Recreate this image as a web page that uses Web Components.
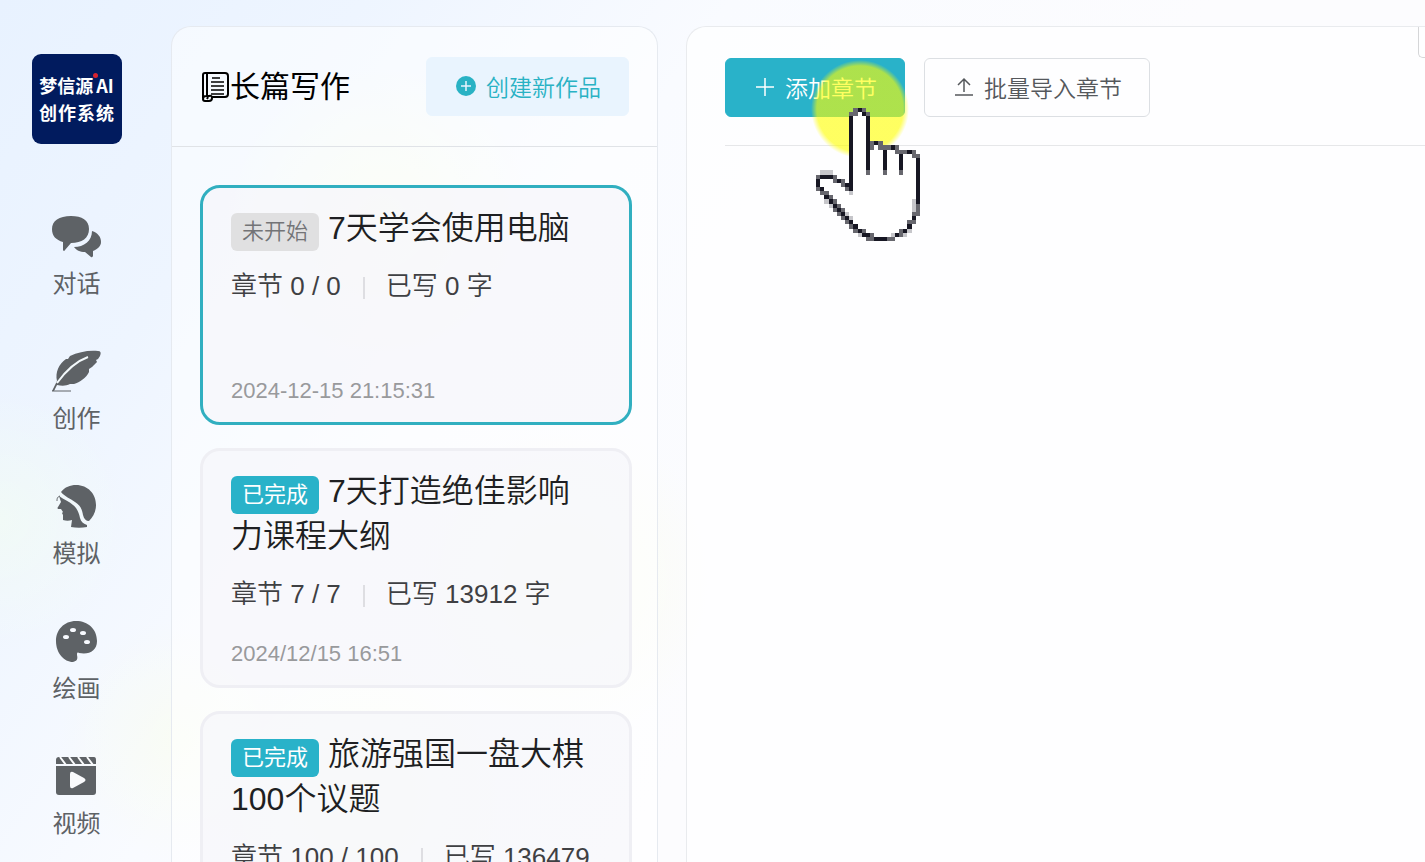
<!DOCTYPE html>
<html lang="zh-CN">
<head>
<meta charset="utf-8">
<title>长篇写作</title>
<style>
  body {
    margin: 0;
    font-family: "Liberation Sans", "Noto Sans CJK SC", sans-serif;
    color: #222;
  }
</style>
</head>
<body>
<novel-app></novel-app>

<script>
const ICONS = {
  chat: `<path d="M19 1C7 1 0 6 0 14c0 7 4 11 11 13v8q1 2 2 0l6-7c11 0 18-5 18-14S30 1 19 1z"/><path d="M40 16c6 2 9 6 9 11 0 4-3 7-8 9v5q-1 2-2 1l-6-5c-5 0-9-2-11-5 10 0 18-6 18-16z"/>`,
  feather: `<path d="M5 31C3 22 7 14 14 9l2 0 2-3c8-4 19-6 28-5q4 0 2 5l-2 3-2 1 1 2-5 5-3 2 0 3c-3 6-9 10-15 12l-4 0c-4 2-8 2-13 1L2 41l-2 0z"/><path d="M5 33C13 22 22 12 36 7" fill="none" stroke="#f2f8fb" stroke-width="2"/><path d="M0 41h19" stroke="currentColor" stroke-width="1" fill="none"/>`,
  head: `<path d="M9 7C13 2 18 0 24 0c12 0 20 9 20 20 0 7-3 12-7 16-3 0-5-2-6-6-1-6-3-10-8-13-5-4-10-5-14-10z"/><path d="M7 11c5 4 10 5 14 9 4 3 6 8 7 13 1 4 4 6 7 7v2c-5 1-11 1-16 0l1-7c-3 1-6 1-9 0l0-5-1-2 1-1-2-3-3 0q-1-1 0-2l3-5z"/><path d="M8 11c-3 1-3 3-3 5" fill="none" stroke="currentColor" stroke-width="1"/>`,
  palette: `<path d="M24 1C12 1 4 10 4 21c0 12 8 21 17 21 4-1 5-3 4-7 0-2 0-3 2-2 10 2 18-2 18-12C45 9 36 1 24 1z"/><g fill="#f8faff"><ellipse cx="14" cy="17" rx="3" ry="2"/><ellipse cx="21" cy="10" rx="3" ry="2"/><ellipse cx="31" cy="13" rx="3" ry="2"/><ellipse cx="35" cy="22" rx="3" ry="2"/></g>`,
  video: `<path d="M7 2h35q2 0 2 3v4H4V5q0-3 3-3z"/><path d="M4 11h40v26q0 3-3 3H7q-3 0-3-3z"/><path d="M8 2l6 8M17 2l6 8M26 2l6 8M35 2l6 8" stroke="#f9fafc" stroke-width="2" fill="none"/><path d="M18 19q0-3 3-2l11 6q3 2 0 4l-11 6q-3 1-3-2z" fill="#f9fafc"/>`
};

const BUTTON_ICONS = {
  plus: '<path d="M11 2v18M2 11h18" fill="none" stroke="currentColor" stroke-width="1.5"/>',
  circle: '<circle cx="11" cy="11" r="10" fill="currentColor"/><path d="M11 6v10M6 11h10" fill="none" stroke="#e9f4fe" stroke-width="1.5"/>',
  upload: '<path d="M11 16V3M5 9l6-6 6 6M2 19h18" fill="none" stroke="currentColor" stroke-width="1.5"/>'
};

class AppLogo extends HTMLElement {
  constructor() {
    super();
    this.attachShadow({ mode: 'open' }).innerHTML = `
      <style>
        :host { display: flex; flex-direction: column; justify-content: center; align-items: center; width: 90px; height: 90px; border-radius: 9px; background: #011b5e; color: #fff; font: 700 18px/27px "Noto Sans CJK SC", sans-serif; }
        .line { display: flex; align-items: center; gap: 3px; white-space: nowrap; }
        .name { position: relative; }
        .name::after { content: ""; position: absolute; top: 1px; right: -5px; width: 5px; height: 5px; border-radius: 50%; background: #d8232f; }
        .wide { gap: 1px; }
      </style>
      <div class="line"><span class="name">梦信源</span><span>AI</span></div>
      <div class="line wide"><span>创</span><span>作</span><span>系</span><span>统</span></div>
    `;
  }
}
customElements.define('app-logo', AppLogo);

class NavItem extends HTMLElement {
  constructor() {
    super();
    this.attachShadow({ mode: 'open' });
  }

  connectedCallback() {
    this.shadowRoot.innerHTML = `
      <style>
        :host { display: block; }
        a { display: flex; flex-direction: column; align-items: center; gap: 8px; color: #5e6266; font-size: 24px; line-height: 36px; text-decoration: none; }
        svg { width: 50px; height: 43px; }
      </style>
      <a href="#${this.getAttribute('icon')}">
        <svg viewBox="0 0 50 43" fill="currentColor" aria-hidden="true">${ICONS[this.getAttribute('icon')]}</svg>
        <slot></slot>
      </a>
    `;
  }
}
customElements.define('nav-item', NavItem);

class SideNav extends HTMLElement {
  constructor() {
    super();
    this.attachShadow({ mode: 'open' }).innerHTML = `
      <style>
        :host { display: block; box-sizing: border-box; padding-top: 54px; }
        app-logo { margin: 0 auto 71px; }
        nav { display: flex; flex-direction: column; gap: 48px; }
      </style>
      <app-logo></app-logo>
      <nav>
        <nav-item icon="chat">对话</nav-item>
        <nav-item icon="feather">创作</nav-item>
        <nav-item icon="head">模拟</nav-item>
        <nav-item icon="palette">绘画</nav-item>
        <nav-item icon="video">视频</nav-item>
      </nav>
    `;
  }
}
customElements.define('side-nav', SideNav);

class ActionButton extends HTMLElement {
  constructor() {
    super();
    this.attachShadow({ mode: 'open' });
  }

  connectedCallback() {
    this.shadowRoot.innerHTML = `
      <style>
        :host { display: block; flex: none; }
        button { display: flex; align-items: center; gap: 9px; box-sizing: border-box; height: 59px; margin: 0; padding: 0 27px 2px 28px; border: 1px solid #dcdfe3; border-radius: 6px; background: transparent; color: #55585c; font-family: inherit; font-size: 23px; font-weight: 350; white-space: nowrap; cursor: pointer; }
        svg { width: 22px; height: 22px; }
        :host([kind="primary"]) button { background: #29b2c9; border-color: #29b2c9; color: #fff; }
        :host([kind="soft"]) button { background: #e9f4fe; border-color: #e9f4fe; color: #29b2c4; }
      </style>
      <button type="button">
        <svg viewBox="0 0 22 22" aria-hidden="true">${BUTTON_ICONS[this.getAttribute('icon')]}</svg>
        <slot></slot>
      </button>
    `;
  }
}
customElements.define('action-button', ActionButton);

class WorkCard extends HTMLElement {
  constructor() {
    super();
    this.attachShadow({ mode: 'open' });
  }

  connectedCallback() {
    const done = this.hasAttribute('done');
    this.shadowRoot.innerHTML = `
      <style>
        :host { display: flex; flex-direction: column; flex: none; box-sizing: border-box; min-height: 240px; padding: 18px 32px 16px 28px; border: 3px solid #efeff4; border-radius: 20px; background: rgba(246, 246, 250, 0.65); }
        :host([active]) { border-color: #31afc0; }
        h3 { margin: 0; font-size: 32px; font-weight: 350; line-height: 45px; color: #1e1f22; }
        .tag { display: inline-block; box-sizing: border-box; height: 38px; margin-right: 9px; padding: 0 11px; border-radius: 6px; background: #e0e0e1; color: #737477; font-size: 22px; line-height: 37px; vertical-align: bottom; }
        .tag.done { background: #29b2c9; color: #fff; font-weight: 400; }
        p { margin: 17px 0 0; font-size: 26px; font-weight: 350; line-height: 36px; color: #3f4043; }
        .bar { display: inline-block; width: 2px; height: 22px; margin: 0 21px 0 22px; background: #dedee2; vertical-align: -4px; }
        time { margin-top: auto; font-size: 22px; line-height: 30px; color: #999a9c; }
      </style>
      <h3><span class="tag ${done ? 'done' : ''}">${done ? '已完成' : '未开始'}</span><slot></slot></h3>
      <p>章节 ${this.getAttribute('chapters')}<span class="bar"></span>已写 ${this.getAttribute('words')} 字</p>
      <time>${this.getAttribute('time')}</time>
    `;
  }
}
customElements.define('work-card', WorkCard);

class WorkList extends HTMLElement {
  constructor() {
    super();
    this.attachShadow({ mode: 'open' }).innerHTML = `
      <style>
        :host { display: flex; flex-direction: column; box-sizing: border-box; min-height: 0; border: 1px solid #e6eaf0; border-bottom: 0; border-radius: 20px 20px 0 0; background: rgba(255, 255, 255, 0.5); overflow: hidden; }
        header { display: flex; align-items: center; justify-content: space-between; flex: none; box-sizing: border-box; height: 120px; padding: 0 28px; border-bottom: 1px solid #e0e3e7; }
        h2 { display: flex; align-items: center; margin: 0; font-size: 30px; font-weight: 400; line-height: 44px; color: #000; }
        h2 svg { width: 30px; height: 32px; }
        .list { display: flex; flex-direction: column; gap: 23px; min-height: 0; padding: 38px 25px 0 28px; overflow: hidden; }
      </style>
      <header>
        <h2>
          <svg viewBox="0 0 30 32" fill="none" stroke="#000" stroke-width="2" aria-hidden="true">
            <path d="M7 2h18q3 0 3 3v18q0 3-3 3H11M7 2H5Q3 2 3 4v23M7 2v23M3 28q0 2 2 2h4q3 0 3-3t-3-2H6q-3 0-3 3zM8 26l-1 2"/>
            <path d="M12 7h8M11 11h13M11 15h13M11 19h13M11 23h13" stroke-width="1.5"/>
          </svg>
          <span>长篇写作</span>
        </h2>
        <action-button kind="soft" icon="circle">创建新作品</action-button>
      </header>
      <div class="list"><slot></slot></div>
    `;
  }
}
customElements.define('work-list', WorkList);

// Enlarged hand pointer: one character per cell, drawn as crisp squares.
const HAND = [
  '.........+#+.............',
  '........++w#+............',
  '........#www#............',
  '........#www#............',
  '........#www#............',
  '........#www#............',
  '........#www#............',
  '........#www#............',
  '........#www#+#+.........',
  '........#www#+w+++#+.....',
  '........#www#www#ww+++#+.',
  '........#www#www#www#ww++',
  '........#www#www#www#www#',
  '........#www#www#www#www#',
  '........#www#www#www#www#',
  '.---....#www+www+www+www#',
  '+###+...#wwwwwwwwwwwwwww#',
  '#www+#+.#wwwwwwwwwwwwwww#',
  '#wwwww+##wwwwwwwwwwwwwww#',
  '+#wwwww+#wwwwwwwwwwwwwww#',
  '.++wwwww-wwwwwwwwwwwwwww#',
  '..#+wwwwwwwwwwwwwwwwwwww#',
  '..-#+wwwwwwwwwwwwwwwwww-#',
  '...-#+wwwwwwwwwwwwwwwww-+',
  '....+#+wwwwwwwwwwwwwwww-+',
  '.....+#-wwwwwwwwwwwwwww++',
  '......+#-wwwwwwwwwwwwww#.',
  '.......+#wwwwwwwwwwwww++.',
  '........+#wwwwwwwwwwww#..',
  '.........+#+wwwwwwww+#-..',
  '..........-##+wwww-#+-...',
  '............++###++......'
];
const HAND_FILL = { '#': '#171723', '+': '#67676e', '-': '#c6c6ca', w: '#fff' };

class HandPointer extends HTMLElement {
  constructor() {
    super();
    let cells = '';
    HAND.forEach((row, y) => {
      [...row].forEach((cell, x) => {
        if (HAND_FILL[cell]) cells += `<rect x="${x}" y="${y}" width="1" height="1" fill="${HAND_FILL[cell]}"/>`;
      });
    });
    this.attachShadow({ mode: 'open' }).innerHTML = `
      <style>
        :host { display: block; pointer-events: none; }
        .spot { width: 98px; height: 98px; border-radius: 50%; background: radial-gradient(closest-side, rgba(255, 255, 0, 0.62) 88%, rgba(255, 255, 0, 0)); }
        svg { position: absolute; left: 5px; top: 48px; width: 104px; height: 133px; }
      </style>
      <div class="spot"></div>
      <svg viewBox="0 0 25 32" shape-rendering="crispEdges" aria-hidden="true">${cells}</svg>
    `;
  }
}
customElements.define('hand-pointer', HandPointer);

class ChapterPanel extends HTMLElement {
  constructor() {
    super();
    this.attachShadow({ mode: 'open' }).innerHTML = `
      <style>
        :host { position: relative; display: block; box-sizing: border-box; padding: 31px 0 0 38px; border: 1px solid #e9ebee; border-width: 1px 0 0 1px; border-radius: 20px 0 0 0; background: rgba(255, 255, 255, 0.7); overflow: hidden; }
        .toolbar { display: flex; gap: 19px; padding-bottom: 28px; border-bottom: 1px solid #e6e7e9; }
        .handle { position: absolute; top: 0; right: 0; width: 6px; height: 30px; border: 1px solid #d5d6d8; border-width: 0 0 1px 1px; border-radius: 0 0 0 5px; }
        hand-pointer { position: absolute; left: 124px; top: 33px; }
      </style>
      <div class="toolbar">
        <action-button kind="primary" icon="plus">添加章节</action-button>
        <action-button icon="upload">批量导入章节</action-button>
      </div>
      <div class="handle"></div>
      <hand-pointer></hand-pointer>
    `;
  }
}
customElements.define('chapter-panel', ChapterPanel);

class NovelApp extends HTMLElement {
  constructor() {
    super();
    this.attachShadow({ mode: 'open' }).innerHTML = `
      <style>
        :host {
          display: grid; grid-template-columns: 153px 487px minmax(0, 1fr); height: 100vh; overflow: hidden;
          background:
            radial-gradient(circle at 0 520px, rgba(244, 255, 238, 0.5), transparent 130px),
            radial-gradient(circle at 180px 740px, rgba(251, 255, 228, 0.4), transparent 120px),
            radial-gradient(circle at 380px 220px, rgba(251, 255, 225, 0.6), transparent 160px),
            radial-gradient(circle at 560px 580px, rgba(251, 255, 225, 0.5), transparent 160px),
            radial-gradient(circle at 360px 800px, rgba(251, 255, 225, 0.5), transparent 160px),
            linear-gradient(125deg, #e8f2ff 0, #eef5ff 18%, #f9fbff 36%, #fcfcfe 60%);
        }
        work-list, chapter-panel { margin-top: 26px; }
        work-list { margin-left: 18px; margin-right: -18px; }
        chapter-panel { margin-left: 46px; }
      </style>
      <side-nav></side-nav>
      <work-list>
        <work-card active chapters="0 / 0" words="0" time="2024-12-15 21:15:31">7天学会使用电脑</work-card>
        <work-card done chapters="7 / 7" words="13912" time="2024/12/15 16:51">7天打造绝佳影响力课程大纲</work-card>
        <work-card done chapters="100 / 100" words="136479" time="2024/12/15 10:20">旅游强国一盘大棋100个议题</work-card>
      </work-list>
      <chapter-panel></chapter-panel>
    `;
  }
}
customElements.define('novel-app', NovelApp);
</script>
</body>
</html>
